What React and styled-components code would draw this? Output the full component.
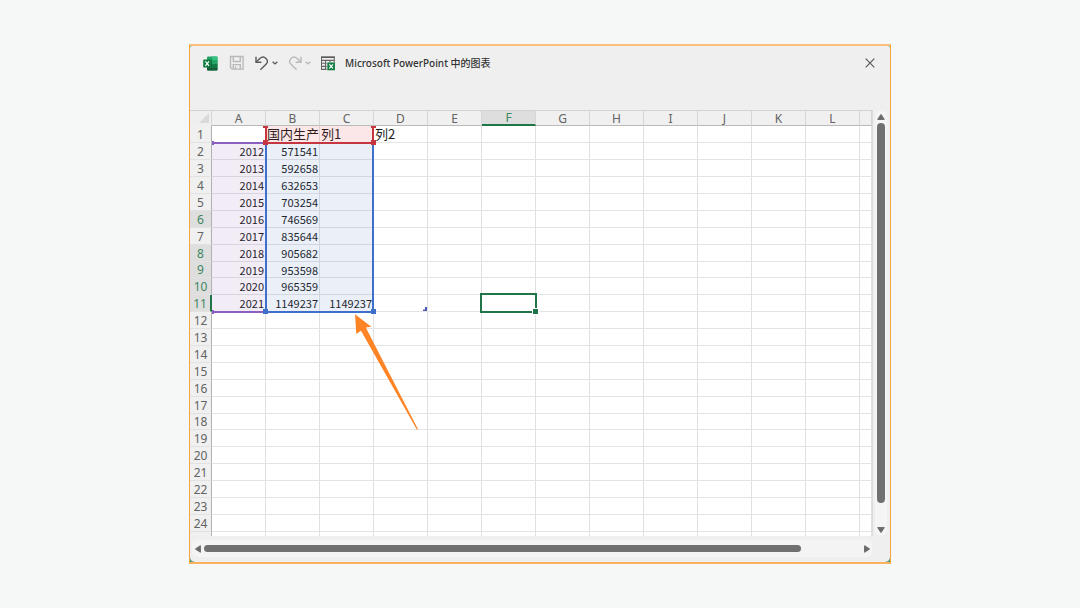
import React from 'react';
import styled, { createGlobalStyle, css } from 'styled-components';

const GlobalStyle = createGlobalStyle`
  * {
    box-sizing: border-box;
  }
  body {
    margin: 0;
    background: #f6f8f7;
    font-family: 'Noto Sans', 'Noto Sans CJK SC', sans-serif;
  }
`;

const green = '#1f7548';

const Page = styled.main`
  min-height: 100vh;
  display: flex;
  align-items: center;
  justify-content: center;
`;

const Frame = styled.section`
  width: 65vw;
  border: 1px solid #f9a440;
  border-width: 2px 1px;
  border-top-color: #fcbf7c;
  border-bottom-color: #fbb260;
  background: #4d9a73;
`;

const Panel = styled.div`
  display: flex;
  flex-direction: column;
  border-radius: 2px 2px 5px 5px;
  background: #efefef;
`;

const TitleBar = styled.header`
  display: flex;
  align-items: flex-start;
  gap: 10px;
  height: 64px;
  padding: 8px 15px 0 13px;
`;

const ToolButton = styled.button`
  display: flex;
  align-items: center;
  gap: 3px;
  height: 18px;
  padding: 0;
  border: 0;
  background: none;
  color: ${({ $muted }) => ($muted ? '#b9b9b9' : '#5a5a5a')};
`;

const Logo = styled.span`
  display: flex;
  align-items: center;
  width: 16px;
  height: 18px;
`;

const Title = styled.h1`
  flex: 1;
  margin: 0;
  font-size: 10px;
  font-weight: 500;
  line-height: 18px;
  color: #333;
`;

const Workspace = styled.div`
  display: flex;
`;

const Sheet = styled.div`
  position: relative;
  flex: 1;
  min-width: 0;
`;

const Grid = styled.table`
  width: 100%;
  table-layout: fixed;
  border-collapse: separate;
  border-spacing: 0;
  border-top: 1px solid #d2d2d2;
  border-right: 1px solid #dcdcdc;
`;

const NumberCol = styled.col`
  width: 22px;
`;

const LetterCol = styled.col`
  width: 54px;
`;

const heading = css`
  padding: 0;
  font-size: 12px;
  font-weight: 400;
  line-height: 13px;
  text-align: center;
  color: ${({ $on }) => ($on ? '#3f8661' : '#636363')};
  background: ${({ $on }) => ($on ? '#dedede' : '#f0f0f0')};
`;

const ColHead = styled.th`
  ${heading};
  height: 15px;
  border-right: 1px solid #d6d6d6;
  border-bottom: ${({ $on }) => ($on ? `2px solid ${green}` : '1px solid #bababa')};
`;

const Corner = styled.th`
  height: 15px;
  padding: 0 2px 1px 0;
  border-right: 1px solid #d6d6d6;
  line-height: 0;
  text-align: right;
`;

const RowHead = styled.th`
  ${heading};
  border-right: ${({ $edge }) => ($edge ? `2px solid ${green}` : '1px solid #b0b0b0')};
  border-bottom: 1px solid #e2e2e2;
`;

const Cell = styled.td`
  padding: 0 1px;
  border-right: 1px solid #e1e1e1;
  border-bottom: 1px solid #e4e4e4;
  background: #fff;
  color: #1c1c1c;
  font-family: 'Noto Sans CJK SC', sans-serif;
  font-size: ${({ $text }) => ($text ? '13px' : '11px')};
  line-height: 14px;
  text-align: ${({ $text }) => ($text ? 'left' : 'right')};
  white-space: nowrap;
`;

/* every ninth row is one pixel shorter, as the sheet is zoomed out */
const Row = styled.tr`
  height: 17px;
  &:nth-child(9n) {
    height: 16px;
  }
`;

const LastRow = styled.tr`
  height: 4px;
  th,
  td {
    border-bottom: 0;
  }
`;

const Range = styled.div`
  position: absolute;
  left: ${({ $x }) => $x}px;
  top: ${({ $y }) => $y}px;
  width: ${({ $w }) => $w}px;
  height: ${({ $h }) => $h}px;
  border: 2px solid ${({ $color }) => $color};
  border-width: ${({ $sides = '2px' }) => $sides};
  background: ${({ $fill = 'none' }) => $fill};
`;

const Handle = styled.i`
  position: absolute;
  left: ${({ $x }) => $x}px;
  top: ${({ $y }) => $y}px;
  width: ${({ $w = 5 }) => $w}px;
  height: ${({ $h = 5 }) => $h}px;
  background: ${({ $color }) => $color};
  box-shadow: ${({ $halo }) => ($halo ? '0 0 0 1px #fff' : 'none')};
`;

const TableEnd = styled.svg`
  position: absolute;
  left: 233px;
  top: 197px;
`;

const Pointer = styled.svg`
  position: absolute;
  left: 164px;
  top: 203px;
`;

const VerticalBar = styled.div`
  display: flex;
  flex-direction: column;
  align-items: center;
  width: 17px;
  padding: 1px 1px 1px 0;
`;

const VerticalTrack = styled.div`
  flex: 1;
  display: flex;
  flex-direction: column;
  align-items: center;
  width: 12px;
  border-radius: 5px;
  background: #f5f5f5;
`;

const HorizontalBar = styled.div`
  height: 26px;
  padding: 4px 18px 0 2px;
`;

const HorizontalTrack = styled.div`
  display: flex;
  align-items: center;
  height: 17px;
  border-radius: 5px;
  background: #f4f4f4;
`;

const Spread = styled.div`
  flex: 1;
  display: flex;
  flex-direction: ${({ $vertical }) => ($vertical ? 'column' : 'row')};
  padding: 1px;
`;

const Thumb = styled.div`
  width: ${({ $vertical }) => ($vertical ? '8px' : '91%')};
  height: ${({ $vertical }) => ($vertical ? '380px' : '7px')};
  border-radius: 4px;
  background: #707070;
`;

const ArrowButton = styled.button`
  display: flex;
  align-items: center;
  justify-content: center;
  width: 11px;
  height: 11px;
  padding: 0;
  border: 0;
  background: none;
  color: #6b6b6b;
`;

const turns = { up: 0, right: 90, down: 180, left: 270 };

const ScrollArrow = ({ to }) => (
  <ArrowButton type="button" aria-label={`Scroll ${to}`}>
    <svg width="8" height="8" viewBox="0 0 8 8">
      <path
        d="M4 1.4 7.3 6.4H.7z"
        fill="currentColor"
        stroke="currentColor"
        strokeLinejoin="round"
        transform={`rotate(${turns[to]} 4 4)`}
      />
    </svg>
  </ArrowButton>
);

const ExcelIcon = () => (
  <svg width="15" height="15" viewBox="0 0 15 15">
    <rect x="4" y="0.5" width="10.5" height="14" rx="1" fill="#21a366" />
    <path d="M4 4h5.3v4H4z" fill="#107c41" />
    <path d="M9.3 4h5.2v4H9.3z" fill="#26a567" />
    <path d="M9.3 0.5h4.2a1 1 0 0 1 1 1V4H9.3z" fill="#33c481" />
    <path d="M4 8h5.3v3.5H4z" fill="#185c37" />
    <path d="M9.3 8h5.2v3.5H9.3z" fill="#107c41" />
    <path d="M4 11.5h10.5v2a1 1 0 0 1-1 1H5a1 1 0 0 1-1-1z" fill="#185c37" />
    <rect x="0.2" y="3.6" width="8" height="8" rx="0.8" fill="#107c41" />
    <path d="m2.4 5.4 3.6 4.4M6 5.4 2.4 9.8" stroke="#fff" strokeWidth="1.2" />
  </svg>
);

const SaveIcon = () => (
  <svg width="16" height="16" viewBox="0 0 16 16" fill="none" stroke="currentColor" strokeWidth="1.4">
    <path d="M1.5 1.5h12.6v12.6H3.2L1.5 12.4z" />
    <path d="M4.3 1.5v5h7v-5M4.3 14.1V9.6h7v4.5M6.6 14v-2.6" />
  </svg>
);

const UndoIcon = ({ flip }) => (
  <svg width="14" height="15" viewBox="0 0 14 15" fill="none" stroke="currentColor" strokeWidth="1.4">
    <g transform={flip ? 'translate(14 0) scale(-1 1)' : undefined}>
      <path d="M1 0.8v5.4h5.4" />
      <path d="M1.2 6 4.8 2.6C6.8.7 9.4.8 11 2.4c1.7 1.7 1.6 4.2 0 5.9L5.4 13.8" />
    </g>
  </svg>
);

const Chevron = () => (
  <svg width="6" height="4" viewBox="0 0 6 4" fill="none" stroke="currentColor" strokeWidth="1.4">
    <path d="m0.6 0.7 2.4 2.2L5.4 0.7" />
  </svg>
);

const EditSheetIcon = () => (
  <svg width="14" height="15" viewBox="0.2 0 14.2 15" fill="none">
    <path
      d="M6 13.5H.7V1h13v5M.7 4.3h13M4.8 4.3v9.2M9.3 4.3V6M.7 7.3H6M.7 10.4H6"
      stroke="#666"
      strokeWidth="1.1"
    />
    <path d="M.2.5h14v1.4H.2z" fill="#5a5a5a" />
    <rect x="6.6" y="6.4" width="7.8" height="8" fill="#168046" />
    <path d="m8.7 8.4 3.6 4.1m0-4.1-3.6 4.1" stroke="#fff" strokeWidth="1.2" />
  </svg>
);

const CloseIcon = () => (
  <svg width="10" height="10" viewBox="0 0 10 10" stroke="currentColor" strokeWidth="1.2">
    <path d="m0.7 0.7 8.6 8.6m0-8.6L0.7 9.3" />
  </svg>
);

const letters = 'ABCDEFGHIJKL'.split('');
const markedRows = [6, 8, 9, 10, 11];

const rows = [
  ['', '国内生产', '列1', '列2'],
  [2012, 571541],
  [2013, 592658],
  [2014, 632653],
  [2015, 703254],
  [2016, 746569],
  [2017, 835644],
  [2018, 905682],
  [2019, 953598],
  [2020, 965359],
  [2021, 1149237, 1149237],
];

const purple = '#8b5fbf';
const blue = '#3d6fcb';
const red = '#c63640';

const Selection = () => (
  <>
    <Range $x={22} $y={32} $w={54} $h={171} $color={purple} $sides="2px 0" $fill="rgba(112, 48, 160, 0.09)" />
    <Range $x={75} $y={32} $w={109} $h={171} $color={blue} $fill="rgba(47, 101, 190, 0.1)" />
    <Range $x={75} $y={16} $w={109} $h={18} $color={red} $sides="0 2px 2px" $fill="rgba(220, 40, 50, 0.11)" />
    <Handle $x={22} $y={31} $w={2} $h={4} $color={purple} />
    <Handle $x={22} $y={200} $w={2} $h={4} $color={purple} />
    <Handle $x={73} $y={16} $h={2} $color={red} />
    <Handle $x={181} $y={16} $h={2} $color={red} />
    <Handle $x={73} $y={30} $color={red} />
    <Handle $x={181} $y={30} $color={red} />
    <Handle $x={73} $y={199} $color={blue} />
    <Handle $x={181} $y={199} $color={blue} />
    <Range $x={290} $y={183} $w={57} $h={20} $color={green} />
    <Handle $x={343} $y={199} $color={green} $halo />
    <TableEnd width="4" height="4" viewBox="0 0 4 4">
      <path d="M4 0v4H0V2.5h2V0z" fill="#4a5cb8" />
    </TableEnd>
  </>
);

const SheetRow = ({ number, values = [] }) => (
  <Row>
    <RowHead scope="row" $on={markedRows.includes(number)} $edge={number === 11}>
      {number}
    </RowHead>
    {letters.map((letter, i) => (
      <Cell key={letter} $text={number === 1}>
        {values[i]}
      </Cell>
    ))}
    <Cell />
  </Row>
);

export default function App() {
  return (
    <>
      <GlobalStyle />
      <Page>
        <Frame>
          <Panel>
            <TitleBar>
              <Logo>
                <ExcelIcon />
              </Logo>
              <ToolButton type="button" aria-label="Save" $muted>
                <SaveIcon />
              </ToolButton>
              <ToolButton type="button" aria-label="Undo">
                <UndoIcon />
                <Chevron />
              </ToolButton>
              <ToolButton type="button" aria-label="Redo" $muted>
                <UndoIcon flip />
                <Chevron />
              </ToolButton>
              <ToolButton type="button" aria-label="Edit data in Excel">
                <EditSheetIcon />
              </ToolButton>
              <Title>Microsoft PowerPoint 中的图表</Title>
              <ToolButton type="button" aria-label="Close">
                <CloseIcon />
              </ToolButton>
            </TitleBar>
            <Workspace>
              <Sheet>
                <Grid>
                  <colgroup>
                    <NumberCol />
                    {letters.map((letter) => (
                      <LetterCol key={letter} />
                    ))}
                    <col />
                  </colgroup>
                  <thead>
                    <tr>
                      <Corner aria-label="Select all">
                        <svg width="10" height="10" viewBox="0 0 10 10">
                          <path d="M10 0v10H0z" fill="#dadada" />
                        </svg>
                      </Corner>
                      {letters.map((letter) => (
                        <ColHead key={letter} scope="col" $on={letter === 'F'}>
                          {letter}
                        </ColHead>
                      ))}
                      <ColHead />
                    </tr>
                  </thead>
                  <tbody>
                    {Array.from({ length: 24 }, (_, i) => (
                      <SheetRow key={i} number={i + 1} values={rows[i]} />
                    ))}
                    <LastRow>
                      <RowHead />
                      {letters.map((letter) => (
                        <Cell key={letter} />
                      ))}
                      <Cell />
                    </LastRow>
                  </tbody>
                </Grid>
                <Selection />
                <Pointer width="66" height="118" viewBox="354 313 66 118">
                  <path
                    d="M355 314.3 371.3 326.7 365.8 327.4 418 429.2 416.8 429.4 361 330.8 356.3 334z"
                    fill="#ff8426"
                  />
                </Pointer>
              </Sheet>
              <VerticalBar>
                <VerticalTrack>
                  <ScrollArrow to="up" />
                  <Spread $vertical>
                    <Thumb $vertical />
                  </Spread>
                  <ScrollArrow to="down" />
                </VerticalTrack>
              </VerticalBar>
            </Workspace>
            <HorizontalBar>
              <HorizontalTrack>
                <ScrollArrow to="left" />
                <Spread>
                  <Thumb />
                </Spread>
                <ScrollArrow to="right" />
              </HorizontalTrack>
            </HorizontalBar>
          </Panel>
        </Frame>
      </Page>
    </>
  );
}
